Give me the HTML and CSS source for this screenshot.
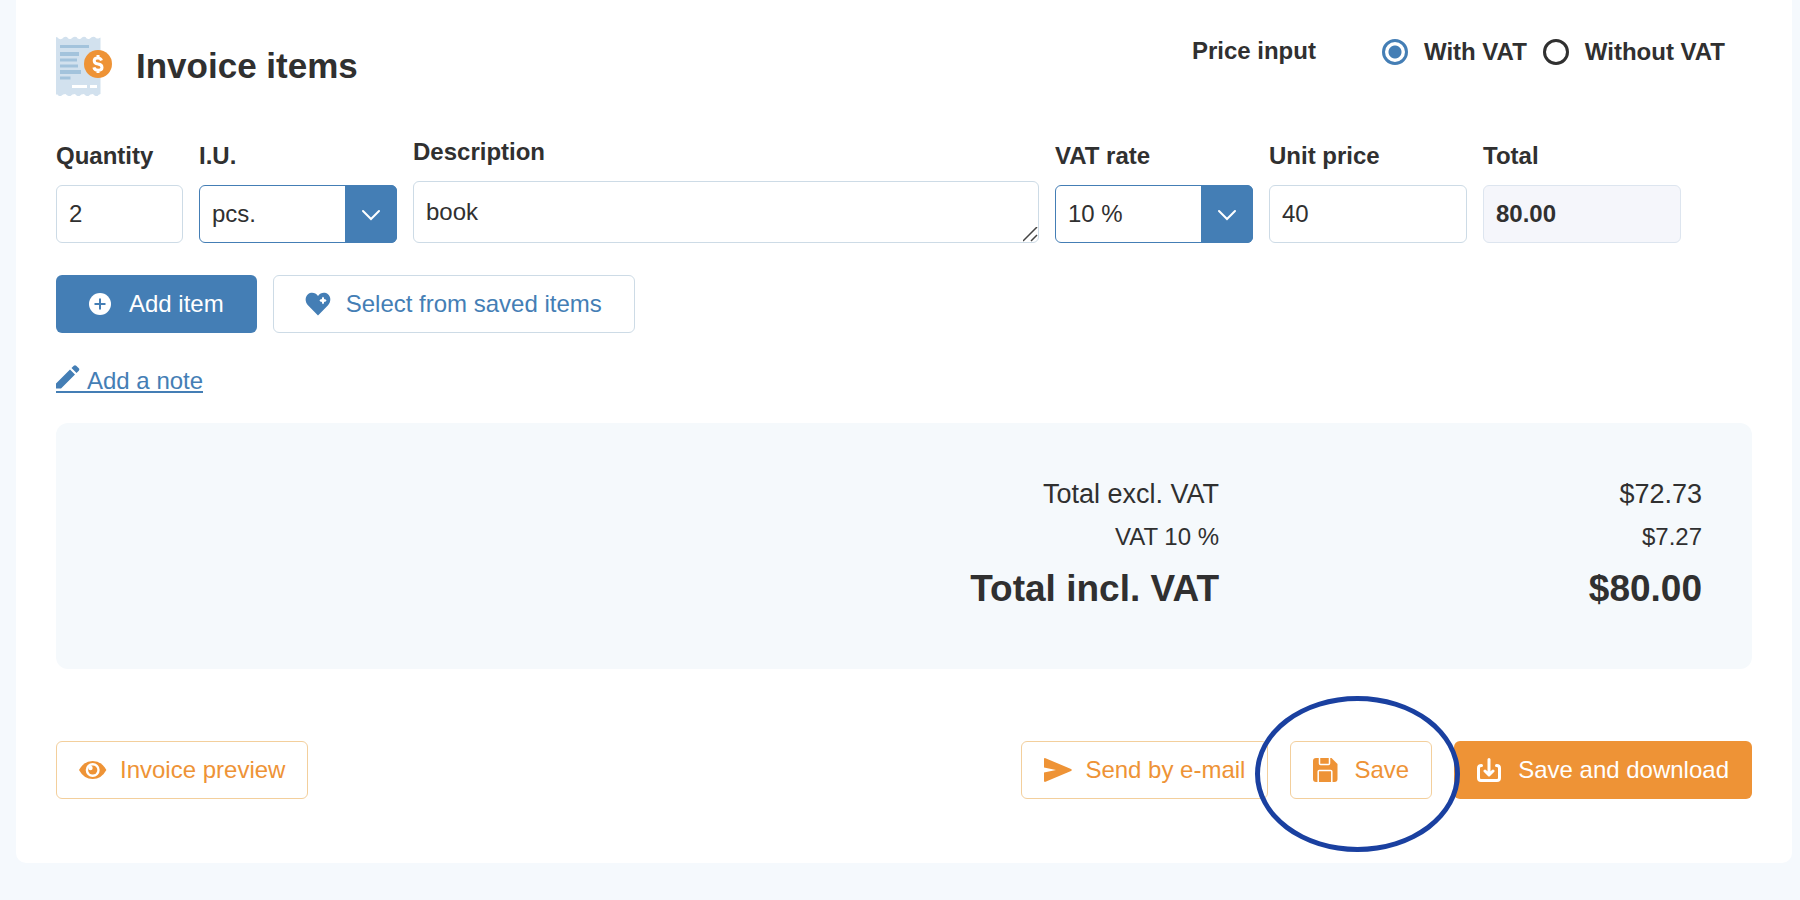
FILE: index.html
```
<!DOCTYPE html>
<html lang="en">
<head>
    <meta charset="utf-8">
    <title>Invoice items</title>
    <link rel="stylesheet" href="styles.css">
</head>
<body>
    <form class="card">
        <div class="header">
            <svg class="header-icon" width="56" height="60" viewBox="0 0 56 60" aria-hidden="true">
                <path fill="#d2e1ee" d="M0 1q2 0 2.500 1.500q2 1.500 4 0q1.500-2.500 4.500-1.500q1.500 3 4.500 1.500q2-2.500 5-1.500q1.500 3 4.500 1.500q1.500-2.500 4.500-1.500q1.500 3 4.500 1.500q2-2.500 5-1.500q1 2 3.500 1.500l2-1V58q-2 .5-3 2q-3 .5-4.500-2q-3 0-4.500 2q-3 .5-4.500-2q-3 0-4.500 2q-3 .5-4.500-2q-3 0-4.500 2q-3 .5-5-2q-2.500 0-4.500 2q-3 .5-4-2L0 59z"/>
                <path stroke="#a3c3dc" stroke-width="3" d="M4 10.500h29M4 24h17M4 30h18M4 42h10.500"/>
                <path stroke="#a3c3dc" stroke-width="4" d="M4 18h19M4 36h21"/>
                <path stroke="#fff" stroke-width="3" d="M16 50.500h15M34 50.500h7"/>
                <circle cx="42" cy="28" r="14" fill="#ee9336"/>
                <path fill="none" stroke="#fff" stroke-width="3" d="M45.500 24.500q-.8-2.500-3.700-2.500q-3.600 0-3.600 2.800t3.800 3.200q4 .6 4 3.400t-4 2.800q-3.500 0-4.100-2.800M42 19v4M42 33v4"/>
            </svg>
            <h1>Invoice items</h1>
            <div class="price-input" role="radiogroup" aria-labelledby="price-input-label">
                <span class="price-input-label" id="price-input-label">Price input</span>
                <label class="radio"><input type="radio" name="price_input" value="with" checked>With VAT</label>
                <label class="radio"><input type="radio" name="price_input" value="without">Without VAT</label>
            </div>
        </div>

        <div class="item-row">
            <div class="field">
                <label for="quantity">Quantity</label>
                <input type="text" id="quantity" value="2">
            </div>
            <div class="field">
                <label for="unit">I.U.</label>
                <div class="select">
                    <select id="unit">
                        <option>pcs.</option>
                    </select>
                    <span class="select-arrow"><svg width="20" height="12" viewBox="0 0 20 12"><path d="M2 2l8 8 8-8"/></svg></span>
                </div>
            </div>
            <div class="field">
                <label for="description">Description</label>
                <textarea id="description" rows="1">book</textarea>
            </div>
            <div class="field">
                <label for="vat_rate">VAT rate</label>
                <div class="select">
                    <select id="vat_rate">
                        <option>10 %</option>
                    </select>
                    <span class="select-arrow"><svg width="20" height="12" viewBox="0 0 20 12"><path d="M2 2l8 8 8-8"/></svg></span>
                </div>
            </div>
            <div class="field">
                <label for="unit_price">Unit price</label>
                <input type="text" id="unit_price" value="40">
            </div>
            <div class="field">
                <label for="total">Total</label>
                <input type="text" id="total" class="total" value="80.00" readonly>
            </div>
        </div>

        <div class="item-actions">
            <button type="button" class="btn btn-wide btn-blue">
                <svg width="24" height="24" viewBox="1 0 24 24" aria-hidden="true">
                    <circle cx="12" cy="12" r="11" fill="#fff"/>
                    <path stroke="#447eb5" stroke-width="2" d="M12 6.500v11M6.500 12h11"/>
                </svg>
                Add item
            </button>
            <button type="button" class="btn btn-wide btn-outline-blue">
                <svg width="24" height="24" viewBox="1 0 24 24" aria-hidden="true">
                    <path fill="#447eb5" d="M13 23.500L3.200 13.500C-.5 9.500.2 4.500 3 2.200C6 0 10.500.3 13 4C15.500.3 20 0 23 2.200c2.800 2.300 3.500 7.300-.2 11.300z"/>
                    <path fill="#fff" d="M18 4.500q.7 3.300 4 4q-3.300.7-4 4q-.7-3.300-4-4q3.300-.7 4-4z"/>
                    <path stroke="#fff" stroke-width="2" d="M18 5.500v6M15 8.500h6"/>
                </svg>
                Select from saved items
            </button>
        </div>

        <a href="#" class="note-link">
            <svg width="24" height="24" viewBox="0 0 24 24" aria-hidden="true"><path fill="#447eb5" d="M0 23.500v-5L14 4.500l5 5L5 23.500zM15.500 3l2.300-2.300q1.200-1 2.400 0l2.600 2.600q1 1.200 0 2.400L20.500 8z"/></svg>
            Add a note
        </a>

        <div class="summary">
            <table>
                <tr>
                    <th scope="row">Total excl. VAT</th>
                    <td>$72.73</td>
                </tr>
                <tr class="vat">
                    <th scope="row">VAT 10 %</th>
                    <td>$7.27</td>
                </tr>
                <tr class="grand-total">
                    <th scope="row">Total incl. VAT</th>
                    <td>$80.00</td>
                </tr>
            </table>
        </div>

        <div class="footer">
            <button type="button" class="btn btn-outline-orange">
                <svg width="28" height="24" viewBox="0 0 28 24" aria-hidden="true">
                    <path fill="#ee9336" d="M0 12Q5 3 13.700 3T27.400 12Q22.500 21 13.700 21T0 12z"/>
                    <circle cx="13.700" cy="12" r="7" fill="#fff"/>
                    <circle cx="13.700" cy="12" r="4.600" fill="#ee9336"/>
                    <circle cx="11.500" cy="10" r="2.200" fill="#fff"/>
                </svg>
                Invoice preview
            </button>
            <button type="button" class="btn btn-outline-orange push">
                <svg width="28" height="24" viewBox="0 0 28 24" aria-hidden="true">
                    <path fill="#ee9336" d="M0 1.200Q0-.4 1.500.2L27 11q1.600 1 0 2L1.500 23.800Q0 24.400 0 22.800V14.500L12 12 0 9.500z"/>
                </svg>
                Send by e-mail
            </button>
            <div class="save">
                <button type="button" class="btn btn-outline-orange">
                    <svg width="28" height="24" viewBox="0 0 28 24" aria-hidden="true">
                        <path fill="#ee9336" d="M3 0H18.500l6 6V21q0 3-3 3H3q-3 0-3-3V3Q0 0 3 0z"/>
                        <path fill="none" stroke="#fff" stroke-width="1.500" d="M6.500 0v5.500q0 1 1 1h8q1 0 1-1V0M5.200 24V13.500q0-1 1-1h11.600q1 0 1 1V24"/>
                    </svg>
                    Save
                </button>
                <span class="highlight"></span>
            </div>
            <button type="submit" class="btn btn-orange">
                <svg width="28" height="24" viewBox="0 0 28 24" aria-hidden="true">
                    <path fill="none" stroke="#fff" stroke-width="3" stroke-linecap="round" stroke-linejoin="round" d="M4.500 7.500Q1.500 7.500 1.500 10V20q0 2.500 2.500 2.500H20q2.500 0 2.500-2.500V10q0-2.500-3-2.500M12 1.500V16M8 13l4 4 4-4"/>
                </svg>
                Save and download
            </button>
        </div>
    </form>
</body>
</html>
```
FILE: styles.css
```
* {
    box-sizing: border-box;
}
body {
    margin: 0;
    padding: 0 8px 37px 16px;
    background-color: #f5f9fd;
    color: #303030;
    font-family: "Liberation Sans", Arial, sans-serif;
    font-size: 24px;
    line-height: 30px;
}
.card {
    padding: 36px 40px 64px;
    background-color: white;
    border-radius: 0 0 10px 10px;
}
input,
select,
textarea,
button {
    font: inherit;
    color: inherit;
}

/* header */
.header {
    display: flex;
    align-items: flex-start;
}
.header-icon {
    flex: none;
}
h1 {
    margin: 8px 0 0 24px;
    font-size: 35px;
    line-height: 44px;
}
.price-input {
    display: flex;
    align-items: flex-start;
    gap: 16px;
    margin-left: auto;
    padding-right: 27px;
    font-weight: bold;
}
.price-input-label {
    margin-right: 50px;
}
.radio {
    display: flex;
    align-items: center;
    gap: 16px;
    padding-top: 1px;
}
.radio input {
    appearance: none;
    width: 26px;
    height: 26px;
    margin: 0;
    border: 3px solid #303030;
    border-radius: 50%;
}
.radio input:checked {
    border-color: #447eb5;
    background: radial-gradient(circle, #447eb5 6px, white 7px);
}

/* item fields */
.item-row {
    display: grid;
    grid-template-columns: 127fr 198fr 626fr 198fr 198fr 198fr;
    gap: 16px;
    align-items: end;
    margin-top: 41px;
    padding-right: 71px;
}
.field label {
    display: block;
    margin-bottom: 14px;
    font-weight: bold;
}
.field input,
.field select,
.field textarea {
    display: block;
    width: 100%;
    height: 58px;
    padding: 0 12px;
    border: 1px solid #cddbe6;
    border-radius: 6px;
    background-color: white;
}
.field textarea {
    height: 62px;
    padding: 15px 12px;
    resize: vertical;
}
.field textarea::-webkit-resizer {
    background: url("data:image/svg+xml,%3Csvg xmlns='http://www.w3.org/2000/svg' width='15' height='15'%3E%3Cpath stroke='%23444' stroke-width='1.500' d='M0 14L14 0M8 14l6-6'/%3E%3C/svg%3E") no-repeat;
}
.field .total {
    background-color: #f5f6fb;
    border-color: #dde5ef;
    font-weight: bold;
}
.select {
    position: relative;
}
.field select {
    appearance: none;
    border-color: #447eb5;
}
.select-arrow {
    position: absolute;
    top: 0;
    right: 0;
    bottom: 0;
    width: 52px;
    display: flex;
    align-items: center;
    justify-content: center;
    padding-top: 2px;
    background-color: #447eb5;
    border-radius: 0 6px 6px 0;
    pointer-events: none;
}
.select-arrow path {
    fill: none;
    stroke: white;
    stroke-width: 2;
    stroke-linecap: round;
}

/* buttons */
.btn {
    display: flex;
    align-items: center;
    gap: 13px;
    height: 58px;
    padding: 0 22px;
    border: 1px solid transparent;
    border-radius: 6px;
    background-color: white;
    white-space: nowrap;
    cursor: pointer;
}
.btn svg {
    overflow: visible;
}
.btn-wide {
    gap: 16px;
    padding: 0 32px;
}
.btn-blue {
    background-color: #447eb5;
    color: white;
}
.btn-outline-blue {
    border-color: #cddbe6;
    color: #447eb5;
}
.btn-outline-orange {
    border-color: #f3cf9c;
    color: #ee9336;
}
.btn-orange {
    background-color: #ee9336;
    color: white;
}
.item-actions {
    display: flex;
    gap: 16px;
    margin: 32px 0;
}
.note-link {
    display: flex;
    align-items: flex-end;
    gap: 7px;
    width: max-content;
    border-bottom: 2px solid #447eb5;
    color: #447eb5;
    line-height: 20px;
    text-decoration: none;
}
.note-link svg {
    margin-bottom: 2px;
}

/* totals */
.summary {
    margin-top: 30px;
    padding: 50px;
    background-color: #f5f9fc;
    border-radius: 12px;
}
.summary table {
    width: 100%;
    border-collapse: collapse;
}
.summary th,
.summary td {
    height: 42px;
    padding: 0;
    font-size: 27px;
    font-weight: normal;
    text-align: right;
}
.summary td {
    width: 483px;
}
.summary .vat th,
.summary .vat td {
    height: 44px;
    font-size: 24px;
}
.summary .grand-total th,
.summary .grand-total td {
    height: 60px;
    font-size: 37px;
    font-weight: bold;
}

.footer {
    display: flex;
    gap: 22px;
    margin-top: 72px;
}
.push {
    margin-left: auto;
}
.save {
    position: relative;
}
/* ring around the save button */
.highlight {
    position: absolute;
    top: -45px;
    left: -35px;
    width: 205px;
    height: 156px;
    border: 5px solid #1a40a0;
    border-radius: 50%;
    pointer-events: none;
    z-index: 1;
}
```
